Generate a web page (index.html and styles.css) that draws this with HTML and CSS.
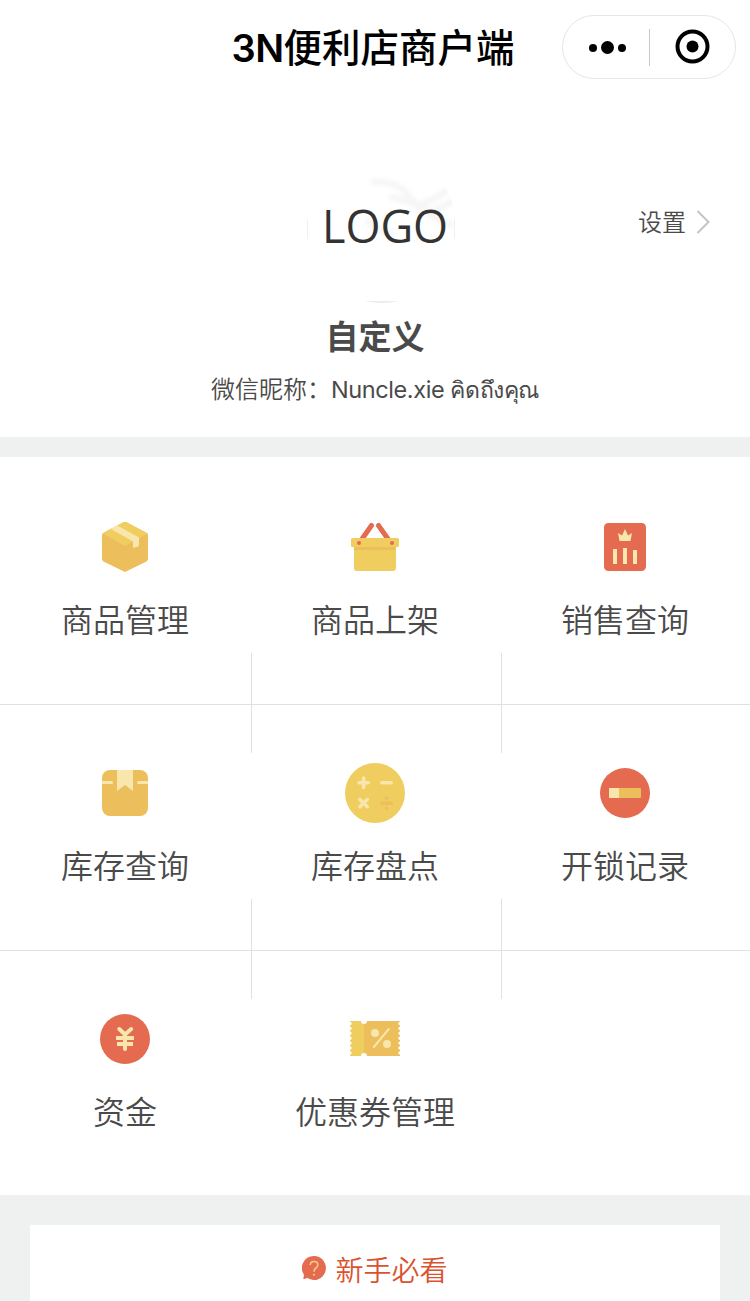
FILE: index.html
```
<!DOCTYPE html>
<html lang="zh-CN">
<head>
    <meta charset="UTF-8">
    <meta name="viewport" content="width=device-width, initial-scale=1.0">
    <title>3N便利店商户端</title>
    <link rel="stylesheet" href="styles.css">
</head>
<body>
    <header class="navbar">
        <h1 class="navbar-title"><span class="navbar-latin">3N</span>便利店商户端</h1>
        <div class="capsule">
            <svg class="capsule-more" width="40" height="20" viewBox="0 0 40 20">
                <circle cx="5" cy="11" r="4"/>
                <circle cx="19.500" cy="10.500" r="6.500"/>
                <circle cx="34" cy="11" r="4"/>
            </svg>
            <span class="capsule-line"></span>
            <svg class="capsule-close" width="36" height="36" viewBox="0 0 36 36">
                <circle cx="18.500" cy="17.500" r="15" fill="none" stroke="#000" stroke-width="4"/>
                <circle cx="18.500" cy="17.500" r="6"/>
            </svg>
        </div>
    </header>

    <section class="profile">
        <div class="avatar">
            <svg class="avatar-bg" width="150" height="150" viewBox="0 0 150 150">
                <defs>
                    <filter id="soft"><feGaussianBlur stdDeviation="2"/></filter>
                    <clipPath id="round"><circle cx="75" cy="75" r="75"/></clipPath>
                </defs>
                <g clip-path="url(#round)">
                    <g fill="none" stroke="#f5f5f5" stroke-width="6" filter="url(#soft)">
                        <path d="M64 29 Q90 27 102 43 T128 60"/>
                        <path d="M82 44 Q102 46 118 58 T146 72"/>
                        <path d="M146 32 Q132 46 114 51"/>
                        <path d="M150 45 Q132 58 116 60"/>
                        <path d="M60 66 Q66 78 86 80"/>
                    </g>
                    <path d="M50 148 H100 V150 H50Z" fill="#ececec"/>
                </g>
                <path d="M.5 66 V86 M147.500 66 V86" stroke="#f0f0f0"/>
            </svg>
            <span class="avatar-text">LOGO</span>
        </div>
        <a class="setting" href="#">
            <span>设置</span>
            <svg width="14" height="24" viewBox="0 0 14 24"><path d="M1.500 1 L12.500 12 L1.500 23" fill="none" stroke="#c4c4c4" stroke-width="2"/></svg>
        </a>
        <h2 class="shop-name">自定义</h2>
        <p class="nickname">微信昵称：<span class="nick-value">Nuncle.xie <span class="nick-thai">คิดถึงคุณ</span></span></p>
    </section>

    <main class="menu">
        <a class="menu-item" href="#">
            <svg class="menu-icon" viewBox="0 0 60 60">
                <path d="M7 18 Q7 16.500 8.500 15.800 L28 5.500 Q30 4.300 32 5.500 L51.500 15.800 Q53 16.500 53 18 V42 Q53 43.500 51.500 44.400 L30 55 L8.500 44.400 Q7 43.500 7 42Z" fill="#ecbe5c"/>
                <path d="M7.500 16.500 L28 5.500 Q30 4.300 32 5.500 L52.500 16.500 L30 29Z" fill="#efcd5f"/>
                <path d="M16 12 L22.300 8.500 L44 20.500 V28.500 Q43 30.500 41.500 30 L38 31 V24.500Z" fill="#f8e6ac"/>
            </svg>
            <span>商品管理</span>
        </a>
        <a class="menu-item" href="#">
            <svg class="menu-icon" viewBox="0 0 60 60">
                <path d="M17 22 L26.500 8.500 M43 22 L33.500 8.500" stroke="#e46a50" stroke-width="5" stroke-linecap="round"/>
                <path d="M9 28 H51 V51 Q51 54 48 54 H12 Q9 54 9 51Z" fill="#efcd5f"/>
                <rect x="9" y="29" width="42" height="4" fill="#ecbe5c"/>
                <rect x="6" y="21" width="48" height="9" rx="1.500" fill="#efcd5f"/>
                <circle cx="14" cy="26" r="2" fill="#e46a50"/>
                <circle cx="47" cy="26" r="2" fill="#e46a50"/>
            </svg>
            <span>商品上架</span>
        </a>
        <a class="menu-item" href="#">
            <svg class="menu-icon" viewBox="0 0 60 60">
                <rect x="9" y="6" width="42" height="48" rx="4.500" fill="#e46a50"/>
                <path d="M23 16 L27 18.500 L30 12 L33 18.500 L37 16 L35.500 24 H24.500Z M18 32 H22 V47 H18Z M28 31 H32 V47 H28Z M38 33 H42 V47 H38Z" fill="#f8e6ac"/>
            </svg>
            <span>销售查询</span>
        </a>
        <a class="menu-item" href="#">
            <svg class="menu-icon" viewBox="0 0 60 60">
                <rect x="7" y="7" width="46" height="46" rx="8" fill="#ecbe5c"/>
                <path d="M22 7 H38 V28 L30 22 L22 28Z M7 18 H17 Q18 18 18 19.500 Q18 21 17 21 H7Z M53 18 H43 Q42 18 42 19.500 Q42 21 43 21 H53Z" fill="#f8e6ac"/>
            </svg>
            <span>库存查询</span>
        </a>
        <a class="menu-item" href="#">
            <svg class="menu-icon" viewBox="0 0 60 60">
                <circle cx="30" cy="30" r="30" fill="#efcd5f"/>
                <g stroke="#f8e6ac" stroke-width="3.600" stroke-linecap="round">
                    <path d="M14 19.800 H23.300 M18.650 15.100 V24.500 M36.800 19.800 H46.200"/>
                    <path d="M15 36.500 L22.300 43.800 M22.300 36.500 L15 43.800"/>
                </g>
                <path d="M36.800 40.200 H46.200" stroke="#ecbe5c" stroke-width="3.600" stroke-linecap="round"/>
                <circle cx="41.500" cy="35.200" r="1.700" fill="#ecbe5c"/>
                <circle cx="41.500" cy="45.200" r="1.700" fill="#ecbe5c"/>
            </svg>
            <span>库存盘点</span>
        </a>
        <a class="menu-item" href="#">
            <svg class="menu-icon" viewBox="0 0 60 60">
                <circle cx="30" cy="30" r="25" fill="#e46a50"/>
                <rect x="14" y="25" width="32" height="10" rx="1" fill="#ecbe5c"/>
                <path d="M24 25 H15 Q14 25 14 26 V34 Q14 35 15 35 H24Z" fill="#f8e6ac"/>
            </svg>
            <span>开锁记录</span>
        </a>
        <a class="menu-item" href="#">
            <svg class="menu-icon" viewBox="0 0 60 60">
                <circle cx="30" cy="30" r="25" fill="#e46a50"/>
                <path d="M24.300 20 L30 25.500 L36.200 20 M30 25 V40" fill="none" stroke="#f8e6ac" stroke-width="4" stroke-linecap="round"/>
                <path d="M21 27 H39 V31 H21Z M22 33 H38 V37 H22Z" fill="#f8e6ac"/>
            </svg>
            <span>资金</span>
        </a>
        <a class="menu-item" href="#">
            <svg class="menu-icon" viewBox="0 0 60 60">
                <path d="M5 12 H19 V47 H5Z" fill="#efcd5f"/>
                <path d="M19 12 H55 V47 H19Z" fill="#ecbe5c"/>
                <g fill="#fff">
                    <circle cx="19" cy="12" r="3"/>
                    <circle cx="19" cy="47" r="3"/>
                </g>
                <path d="M5 14.500 V46 M55 14.500 V46" stroke="#fff" stroke-width="3.400" stroke-linecap="round" stroke-dasharray="0 4.900"/>
                <circle cx="30" cy="24" r="4" fill="#f8e6ac"/>
                <circle cx="42" cy="35" r="4" fill="#f8e6ac"/>
                <path d="M28.800 38 L43.800 20" stroke="#f8e6ac" stroke-width="2" stroke-linecap="round"/>
            </svg>
            <span>优惠券管理</span>
        </a>
    </main>

    <footer class="guide">
        <a class="guide-link" href="#">
            <svg width="24" height="24" viewBox="0 0 24 24">
                <path d="M12 0 A12 12 0 1 1 5 21.800 Q4 23 1.200 23 Q2 21 1.800 18.500 A12 12 0 0 1 12 0Z" fill="#e46a50"/>
                <path d="M8.300 9 Q8.300 5.500 12 5.500 Q15.800 5.500 15.800 8.700 Q15.800 10.500 14 12 Q12 13.300 12 15.800" fill="none" stroke="#f5cf87" stroke-width="1.500"/>
                <circle cx="12" cy="18.800" r="1.100" fill="#f5cf87"/>
            </svg>
            <span>新手必看</span>
        </a>
    </footer>
</body>
</html>
```
FILE: styles.css
```
* {
    box-sizing: border-box;
}

body {
    margin: 0;
    height: 1301px;
    overflow: hidden;
    font-family: "Noto Sans CJK SC", sans-serif;
    font-weight: 350;
    background-color: #eff1f0;
    color: #4a4a4a;
}

a {
    color: inherit;
    text-decoration: none;
}

.navbar {
    height: 128px;
    padding: 15px 14px 0 0;
    display: grid;
    grid-template-columns: 1fr 284px 1fr;
    align-items: start;
    background-color: #fff;
}

.navbar-title {
    grid-column: 2;
    margin: 0 -6px 0 4px;
    font-family: Inter, "Noto Sans CJK SC", sans-serif;
    font-size: 38.5px;
    font-weight: 500;
    line-height: 67px;
    white-space: nowrap;
    text-align: center;
    color: #000;
}

.navbar-latin {
    font-size: 38px;
    font-weight: 600;
    letter-spacing: -0.6px;
}

.capsule {
    justify-self: end;
    width: 174px;
    height: 64px;
    border: 1px solid #e6e6e6;
    border-radius: 32px;
    display: flex;
    align-items: center;
    padding: 0 25px;
    justify-content: space-between;
}

.capsule-line {
    width: 1px;
    height: 37px;
    margin: 0 0 0 -3px;
    background-color: #c8c8c8;
}

.profile {
    position: relative;
    height: 309px;
    padding-top: 25px;
    display: flex;
    flex-direction: column;
    align-items: center;
    background-color: #fff;
}

.avatar {
    position: relative;
    width: 150px;
    height: 150px;
    margin-left: 14px;
    padding: 0 0 5px 6px;
    display: flex;
    justify-content: center;
    align-items: center;
}

.avatar-bg {
    position: absolute;
    left: 0;
    top: 0;
}

.avatar-text {
    position: relative;
    font-family: "Open Sans", sans-serif;
    font-size: 45px;
    font-weight: 400;
    line-height: 60px;
    color: #333;
}

.setting {
    position: absolute;
    right: 40px;
    top: 77px;
    display: flex;
    align-items: center;
    gap: 10px;
    font-size: 24px;
    line-height: 36px;
}

.setting span {
    margin-top: -2px;
}

.shop-name {
    margin: 7px 0 0;
    font-size: 33px;
    font-weight: 700;
    line-height: 50px;
}

.nickname {
    margin: 10px 0 0;
    font-size: 24px;
    line-height: 36px;
    white-space: nowrap;
}

.nick-value {
    font-family: Inter, "Noto Sans CJK SC", sans-serif;
    font-size: 23.5px;
    font-weight: 400;
    letter-spacing: -0.4px;
}

.nick-thai {
    font-size: 23px;
}

.menu {
    margin-top: 20px;
    height: 738px;
    padding-top: 2px;
    display: grid;
    grid-template-columns: repeat(3, 250px);
    grid-template-rows: 246px 246px 244px;
    background-color: #fff;
}

.menu-item {
    position: relative;
    padding-top: 58px;
    display: flex;
    flex-direction: column;
    align-items: center;
    gap: 19px;
    font-size: 32px;
    line-height: 44px;
}

.menu-item:nth-child(-n+6) {
    box-shadow: inset 0 -1px #e0e0e0;
}

/* short divider crossing each row line */
.menu-item:nth-child(-n+6):not(:nth-child(3n))::after {
    content: "";
    position: absolute;
    right: -2px;
    bottom: -48px;
    width: 1px;
    height: 100px;
    background-color: #e0e0e0;
}

.menu-icon {
    width: 60px;
    height: 60px;
}

.guide {
    padding: 30px 30px 0;
}

.guide-link {
    height: 90px;
    padding-top: 23px;
    display: flex;
    justify-content: center;
    gap: 9px;
    font-size: 28px;
    line-height: 42px;
    color: #d9532f;
    background-color: #fff;
}

.guide-link svg {
    margin-top: 8px;
}
```
